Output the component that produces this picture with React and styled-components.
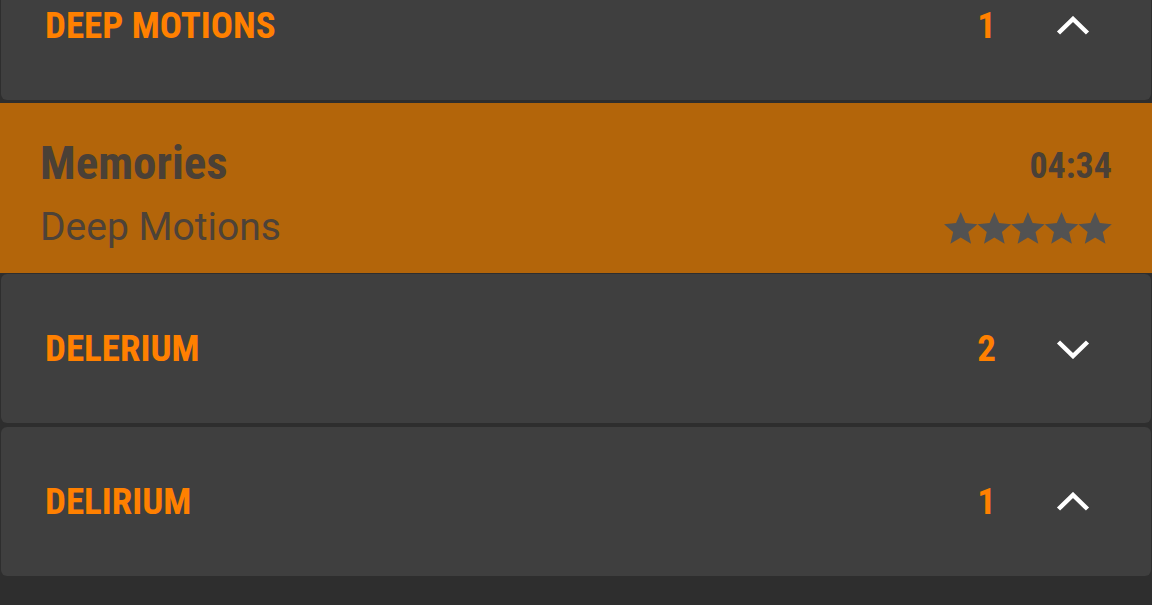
import React from 'react'
import styled, { createGlobalStyle } from 'styled-components'

const GlobalStyle = createGlobalStyle`
  html, body {
    margin: 0;
    padding: 0;
    background: #2e2e2e;
    overflow: hidden;
  }
  body {
    font-family: Roboto, "Liberation Sans", sans-serif;
  }
`

const condensed = `"Roboto Condensed", "Liberation Sans Narrow", "DejaVu Sans Condensed", Roboto, sans-serif`

const Screen = styled.div`
  width: 1152px;
  height: 605px;
  overflow: hidden;
  background: #2e2e2e;
`

// scrolled list: first group header is partly above the viewport
const List = styled.div`
  display: flex;
  flex-direction: column;
  margin-top: -49px;
`

const Group = styled.div`
  display: flex;
  align-items: center;
  height: 149px;
  margin: 0 1px ${({ $gap }) => $gap}px;
  padding: 0 61px 0 44px;
  background: #3f3f3f;
  border-radius: 6px;
  box-sizing: border-box;
`

const GroupName = styled.div`
  flex: 1;
  font-family: ${condensed};
  font-weight: 700;
  font-size: 37px;
  color: #ff8000;
  text-transform: uppercase;
`

const Count = styled.div`
  font-family: ${condensed};
  font-weight: 700;
  font-size: 37px;
  color: #ff8000;
  margin-right: 60px;
`

const Track = styled.div`
  display: flex;
  justify-content: space-between;
  height: 170px;
  margin-bottom: 1px;
  padding: 0 40px;
  background: #b3650a;
  box-sizing: border-box;
  color: #4a4036;
`

const TrackLeft = styled.div`
  display: flex;
  flex-direction: column;
  padding-top: 30px;
`

const TrackRight = styled.div`
  display: flex;
  flex-direction: column;
  align-items: flex-end;
  padding-top: 40px;
`

const Title = styled.div`
  font-family: ${condensed};
  font-weight: 700;
  font-size: 47px;
  line-height: 60px;
`

const Artist = styled.div`
  font-family: Roboto, sans-serif;
  font-size: 39px;
  line-height: 44px;
  margin-top: 12px;
  color: #4d4238;
`

const Duration = styled.div`
  font-family: ${condensed};
  font-weight: 700;
  font-size: 36px;
  line-height: 46px;
`

const Stars = styled.svg`
  display: block;
  margin-top: 23px;
`

const Chevron = ({ up }) => (
  <svg width="34" height="20" viewBox="0 0 34 20">
    <polyline
      points={up ? '2.5,17 17,3 31.5,17' : '2.5,3 17,17 31.5,3'}
      fill="none"
      stroke="#ffffff"
      strokeWidth="4.5"
    />
  </svg>
)

const STAR = 'M12 17.27L18.18 21l-1.64-7.03L22 9.24l-7.19-.61L12 2 9.19 8.63 2 9.24l5.46 4.73L5.82 21z'

const Rating = ({ value }) => (
  <Stars width="168" height="32" viewBox="0 0 168 32">
    {[0, 1, 2, 3, 4].map((i) => (
      <path
        key={i}
        d={STAR}
        transform={`translate(${(i * 33.6 - 3.3).toFixed(2)} -3.3) scale(1.67)`}
        fill={i < value ? '#525252' : '#7a5a30'}
      />
    ))}
  </Stars>
)

const data = [
  { name: 'Deep Motions', count: 1, open: true, tracks: [{ title: 'Memories', artist: 'Deep Motions', time: '04:34', rating: 5 }] },
  { name: 'Delerium', count: 2, open: false, tracks: [] },
  { name: 'Delirium', count: 1, open: true, tracks: [] },
]

export default function App() {
  return (
    <Screen>
      <GlobalStyle />
      <List>
        {data.map((g) => (
          <React.Fragment key={g.name}>
            <Group $gap={g.tracks.length ? 3 : 4}>
              <GroupName>{g.name}</GroupName>
              <Count>{g.count}</Count>
              <Chevron up={g.open} />
            </Group>
            {g.tracks.map((t) => (
              <Track key={t.title}>
                <TrackLeft>
                  <Title>{t.title}</Title>
                  <Artist>{t.artist}</Artist>
                </TrackLeft>
                <TrackRight>
                  <Duration>{t.time}</Duration>
                  <Rating value={t.rating} />
                </TrackRight>
              </Track>
            ))}
          </React.Fragment>
        ))}
      </List>
    </Screen>
  )
}
